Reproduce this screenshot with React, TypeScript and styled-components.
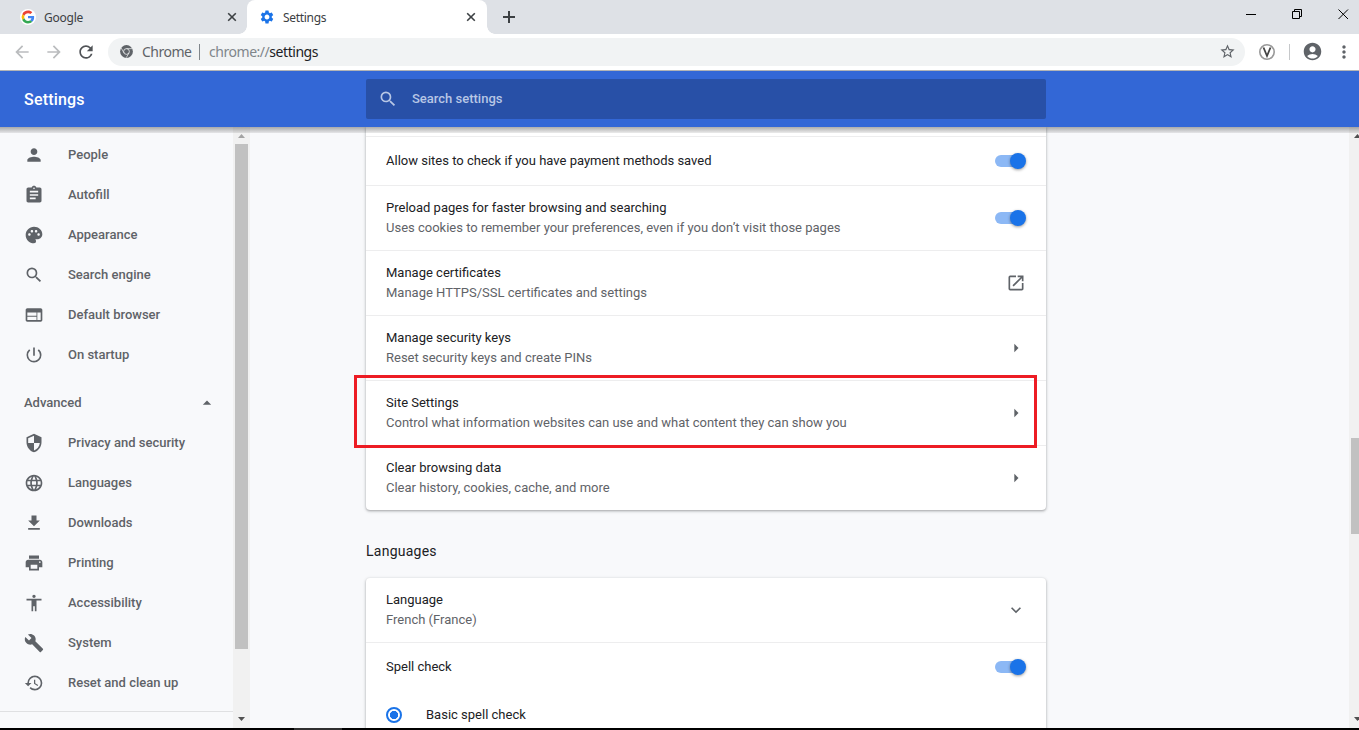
import React from "react";
import styled, { createGlobalStyle } from "styled-components";
import {
  MdPerson, MdAssignment, MdPalette, MdSearch, MdWeb, MdPowerSettingsNew, MdArrowDropUp,
  MdSecurity, MdLanguage, MdFileDownload, MdPrint, MdAccessibility, MdBuild, MdRestore,
  MdOpenInNew, MdArrowRight, MdExpandMore, MdStarBorder, MdAccountCircle, MdMoreVert,
  MdArrowBack, MdArrowForward, MdRefresh, MdSettings,
} from "react-icons/md";

const GlobalStyle = createGlobalStyle`
  * { box-sizing: border-box; }
  body { margin: 0; overflow: hidden; font-family: Roboto, sans-serif; font-size: 13px; color: #202124; }
  svg { display: block; flex: none; }
`;

const Window = styled.div`
  width: 1359px;
  height: 730px;
  display: flex;
  flex-direction: column;
  overflow: hidden;
  background: #f8f9fb;
`;

/* ---------- tab strip ---------- */

const TabStrip = styled.div`
  flex: none;
  height: 34px;
  display: flex;
  background: #dee1e6;
`;

const Tab = styled.div<{ $active?: boolean }>`
  position: relative;
  width: ${(p) => (p.$active ? 240 : 247)}px;
  display: flex;
  align-items: center;
  padding: 0 ${(p) => (p.$active ? 11 : 10)}px 0 ${(p) => (p.$active ? 12 : 20)}px;
  border-radius: 8px 8px 0 0;
  background: ${(p) => (p.$active ? "#fff" : "transparent")};
  font: 12px "Noto Sans", sans-serif;
  color: #3c4043;
`;

const TabFoot = styled.span<{ $side: "left" | "right" }>`
  position: absolute;
  bottom: 0;
  ${(p) => p.$side}: -8px;
  width: 8px;
  height: 8px;
  background: radial-gradient(circle at ${(p) => p.$side} top, transparent 7.5px, #fff 8px);
`;

const TabTitle = styled.span<{ $spacing: number }>`
  flex: 1;
  margin-left: 8px;
  letter-spacing: ${(p) => p.$spacing}px;
`;

const NewTab = styled.div`
  padding: 11px 0 0 16px;
`;

const WindowButtons = styled.div`
  margin-left: auto;
  display: flex;
  gap: 36px;
  padding: 9px 10px 0 0;
`;

/* ---------- address bar ---------- */

const Toolbar = styled.div`
  flex: none;
  height: 37px;
  display: flex;
  align-items: center;
  padding: 0 5px 1px 12px;
  border-bottom: 1px solid #b3b4b6;
  background: #fff;
  color: #5f6368;
`;

const NavIcons = styled.div`
  flex: none;
  display: flex;
  gap: 12px;
  margin-right: 12px;
`;

const AddressBar = styled.div`
  flex: none;
  width: 1137px;
  height: 28px;
  display: flex;
  align-items: center;
  padding: 0 9px 0 12px;
  border-radius: 14px;
  background: #f1f3f4;
  font: 14px "Noto Sans", sans-serif;
`;

const SiteName = styled.span`
  width: 57px;
  margin-left: 9px;
  color: #5f6368;
  letter-spacing: -0.5px;
`;

const Divider = styled.span<{ $color: string }>`
  width: 1px;
  height: 16px;
  background: ${(p) => p.$color};
`;

const Url = styled.span`
  flex: 1;
  margin-left: 9px;
  color: #80868b;
  letter-spacing: -0.46px;
  b { font-weight: 400; color: #202124; }
`;

const Extensions = styled.div`
  flex: 1;
  display: flex;
  align-items: center;
  padding-left: 13px;
`;

const Profile = styled.span`
  margin: 0 11px 0 12px;
`;

const ExtensionIcon = styled.span`
  margin-right: 13px;
`;

/* ---------- settings header ---------- */

const Header = styled.header`
  flex: none;
  position: relative;
  z-index: 2;
  height: 56px;
  display: flex;
  align-items: center;
  background: #3367d6;
`;

const HeaderShade = styled.div`
  position: absolute;
  top: 100%;
  left: 0;
  right: 0;
  height: 6px;
  background: linear-gradient(rgba(0, 0, 0, 0.32), rgba(0, 0, 0, 0.08));
`;

const HeaderTitle = styled.h1`
  width: 366px;
  margin: 0;
  padding: 1px 0 0 24px;
  font-size: 16px;
  font-weight: 500;
  letter-spacing: 0.2px;
  color: #fff;
`;

const SearchBox = styled.div`
  width: 680px;
  height: 40px;
  display: flex;
  align-items: center;
  gap: 14px;
  padding-left: 12px;
  border-radius: 2px;
  background: #2850a7;
  color: #b7c6e5;
  font-weight: 500;
`;

/* ---------- body ---------- */

const Body = styled.div`
  flex: 1;
  min-height: 0;
  display: flex;
`;

const Sidebar = styled.nav`
  width: 233px;
  padding-top: 8px;
  color: #5f6368;
  font-weight: 500;
`;

const NavItem = styled.div`
  height: 40px;
  display: flex;
  align-items: center;
  gap: 24px;
  padding-left: 24px;
`;

const RaisedText = styled.span`
  padding-bottom: 2px;
`;

const NavGroup = styled(NavItem)`
  justify-content: space-between;
  margin-top: 8px;
  padding-right: 16px;
`;

const NavRule = styled.div`
  margin-top: 8px;
  border-top: 1px solid #dfe0e2;
`;

const ScrollTrack = styled.div<{ $width: number }>`
  flex: none;
  width: ${(p) => p.$width}px;
  display: flex;
  flex-direction: column;
  justify-content: space-between;
  padding: 7px 0;
  overflow: hidden;
  background: #f1f1f1;
`;

const ScrollThumb = styled.div<{ $before: number; $height: number }>`
  width: 13px;
  height: ${(p) => p.$height}px;
  margin: ${(p) => p.$before}px 0 auto 2px;
  background: #c1c1c1;
`;

const ScrollArrow = styled.svg<{ $left: number }>`
  margin-left: ${(p) => p.$left}px;
`;

const Main = styled.main`
  flex: 1;
  overflow: hidden;
  padding-left: 116px;
`;

const Card = styled.section`
  position: relative;
  width: 680px;
  background: #fff;
  border-radius: 4px;
  box-shadow: 0 1px 2px rgba(60, 64, 67, 0.3), 0 1px 3px 1px rgba(60, 64, 67, 0.15);
`;

const PrivacyCard = styled(Card)`
  padding-top: 9px;
  border-radius: 0 0 4px 4px;
`;

const Row = styled.div<{ $tall?: boolean }>`
  height: ${(p) => (p.$tall ? 65 : 49)}px;
  display: flex;
  align-items: center;
  justify-content: space-between;
  padding: 0 20px;
  border-top: 1px solid #ededee;
`;

const FirstRow = styled(Row)`
  height: 64px;
  border-top: none;
`;

const Label = styled.div`
  line-height: 20px;
`;

const Hint = styled.div`
  line-height: 20px;
  color: #5f6368;
`;

const IconSlot = styled.span`
  color: #5f6368;
`;

const SectionTitle = styled.h2`
  height: 68px;
  margin: 0;
  padding-top: 14px;
  line-height: 54px;
  font-size: 14px;
  font-weight: 400;
  letter-spacing: 0.25px;
`;

const Track = styled.span`
  width: 28px;
  height: 12px;
  margin-right: 3px;
  display: flex;
  align-items: center;
  justify-content: flex-end;
  border-radius: 6px;
  background: #8cb8f5;
`;

const Knob = styled.span`
  flex: none;
  width: 16px;
  height: 16px;
  margin-right: -3px;
  border-radius: 50%;
  background: #1a73e8;
  box-shadow: 0 1px 3px rgba(0, 0, 0, 0.4);
`;

const RadioRow = styled.div`
  height: 48px;
  display: flex;
  align-items: center;
  gap: 24px;
  padding-left: 20px;
`;

const Radio = styled.span`
  width: 16px;
  height: 16px;
  border: 2px solid #1a73e8;
  border-radius: 50%;
  background: radial-gradient(circle, #1a73e8 3.8px, #fff 4.4px);
`;

const Highlight = styled.div`
  position: absolute;
  left: -12px;
  top: 248px;
  width: 683px;
  height: 73px;
  border: 3px solid #ed1c24;
`;

const Taskbar = styled.div`
  flex: none;
  height: 2px;
  padding-left: 294px;
  background: #000;
`;

const TaskbarItem = styled.div`
  width: 48px;
  height: 2px;
  background: #303030;
`;

/* ---------- drawings ---------- */

const GoogleLogo = () => (
  <svg width="16" height="16" viewBox="0 0 16 16">
    <circle cx="8" cy="8" r="8" fill="#fff" />
    <g transform="translate(1.6 1.6) scale(.267)">
      <path fill="#EA4335" d="M24 9.5c3.54 0 6.71 1.22 9.21 3.6l6.85-6.85C35.9 2.38 30.47 0 24 0 14.62 0 6.51 5.38 2.56 13.22l7.98 6.19C12.43 13.72 17.74 9.5 24 9.5z" />
      <path fill="#4285F4" d="M46.98 24.55c0-1.57-.15-3.09-.38-4.55H24v9.02h12.94c-.58 2.96-2.26 5.48-4.78 7.18l7.73 6c4.51-4.18 7.09-10.36 7.09-17.65z" />
      <path fill="#FBBC05" d="M10.53 28.59a14.5 14.5 0 0 1 0-9.18l-7.98-6.19a24 24 0 0 0 0 21.56l7.98-6.19z" />
      <path fill="#34A853" d="M24 48c6.48 0 11.93-2.13 15.89-5.81l-7.73-6c-2.15 1.45-4.92 2.3-8.16 2.3-6.26 0-11.57-4.22-13.47-9.91l-7.98 6.19C6.51 42.62 14.62 48 24 48z" />
    </g>
  </svg>
);

const TabClose = () => (
  <svg width="10" height="10" viewBox="0 0 10 10" stroke="#3c4043" strokeWidth="1.6">
    <path d="M1.2 1.2l7.6 7.6M8.8 1.2l-7.6 7.6" />
  </svg>
);

const ChromeGlyph = () => (
  <svg width="13" height="13" viewBox="0 0 24 24">
    <circle cx="12" cy="12" r="11.8" fill="#5f6368" />
    <circle cx="12" cy="12" r="5.3" fill="none" stroke="#f1f3f4" strokeWidth="1.5" />
    <path d="M12 6.7h10.5M7.4 14.6L2.2 5.6M16.6 14.6L11.4 23.6" stroke="#f1f3f4" strokeWidth="1.3" />
  </svg>
);

const UpArrow = ({ left, color }: { left: number; color: string }) => (
  <ScrollArrow $left={left} width="7" height="4" viewBox="0 0 7 4">
    <path d="M0 4L3.5 0L7 4z" fill={color} />
  </ScrollArrow>
);

const DownArrow = ({ left }: { left: number }) => (
  <ScrollArrow $left={left} width="7" height="4" viewBox="0 0 7 4">
    <path d="M0 0L3.5 4L7 0z" fill="#505050" />
  </ScrollArrow>
);

const Toggle = () => <Track><Knob /></Track>;
const Chevron = () => <IconSlot><MdArrowRight size={20} /></IconSlot>;

const basicItems = [
  [MdPerson, "People"],
  [MdAssignment, "Autofill"],
  [MdPalette, "Appearance"],
  [MdSearch, "Search engine"],
  [MdWeb, "Default browser"],
  [MdPowerSettingsNew, "On startup"],
] as const;

const advancedItems = [
  [MdSecurity, "Privacy and security"],
  [MdLanguage, "Languages"],
  [MdFileDownload, "Downloads"],
  [MdPrint, "Printing"],
  [MdAccessibility, "Accessibility"],
  [MdBuild, "System"],
  [MdRestore, "Reset and clean up"],
] as const;

const privacyRows = [
  { label: "Preload pages for faster browsing and searching", hint: "Uses cookies to remember your preferences, even if you don’t visit those pages", end: <Toggle /> },
  { label: "Manage certificates", hint: "Manage HTTPS/SSL certificates and settings", end: <IconSlot><MdOpenInNew size={20} /></IconSlot> },
  { label: "Manage security keys", hint: "Reset security keys and create PINs", end: <Chevron /> },
  { label: "Site Settings", hint: "Control what information websites can use and what content they can show you", end: <Chevron /> },
  { label: "Clear browsing data", hint: "Clear history, cookies, cache, and more", end: <Chevron /> },
];

export default function App() {
  return (
    <Window>
      <GlobalStyle />
      <TabStrip>
        <Tab>
          <GoogleLogo />
          <TabTitle $spacing={-0.25}>Google</TabTitle>
          <TabClose />
        </Tab>
        <Tab $active>
          <TabFoot $side="left" />
          <TabFoot $side="right" />
          <MdSettings size={16} color="#1a73e8" />
          <TabTitle $spacing={-0.3}>Settings</TabTitle>
          <TabClose />
        </Tab>
        <NewTab>
          <svg width="12" height="12" viewBox="0 0 12 12" stroke="#3c4043" strokeWidth="2">
            <path d="M6 0v12M0 6h12" />
          </svg>
        </NewTab>
        <WindowButtons>
          <svg width="10" height="11" viewBox="0 0 10 11"><path d="M0 5.5h10" stroke="#000" /></svg>
          <svg width="10" height="11" viewBox="0 0 10 11" fill="none" stroke="#000">
            <path d="M.5 2.5h7v7h-7zM2.5 2.5v-2h7v7h-2" />
          </svg>
          <svg width="11" height="11" viewBox="0 0 11 11" stroke="#000"><path d="M.5.5l9.5 9.5M10 .5l-9.5 9.5" /></svg>
        </WindowButtons>
      </TabStrip>

      <Toolbar>
        <NavIcons>
          <MdArrowBack size={20} color="#babcbe" />
          <MdArrowForward size={20} color="#babcbe" />
          <MdRefresh size={20} color="#505357" />
        </NavIcons>
        <AddressBar>
          <ChromeGlyph />
          <SiteName>Chrome</SiteName>
          <Divider $color="#80868b" />
          <Url>chrome://<b>settings</b></Url>
          <MdStarBorder size={17} />
        </AddressBar>
        <Extensions>
          <ExtensionIcon>
            <svg width="18" height="18" viewBox="0 0 18 18" fill="none">
              <circle cx="9" cy="9" r="7.2" stroke="#999" strokeWidth="1.6" />
              <path d="M5.5 4.5L9 13L12.5 4.5" stroke="#444" strokeWidth="1.8" />
            </svg>
          </ExtensionIcon>
          <Divider $color="#c6c8ca" />
          <Profile><MdAccountCircle size={21} /></Profile>
          <MdMoreVert size={20} />
        </Extensions>
      </Toolbar>

      <Header>
        <HeaderTitle>Settings</HeaderTitle>
        <SearchBox>
          <MdSearch size={20} />
          <RaisedText>Search settings</RaisedText>
        </SearchBox>
        <HeaderShade />
      </Header>

      <Body>
        <Sidebar>
          {basicItems.map(([Icon, text]) => (
            <NavItem key={text}><Icon size={20} /><RaisedText>{text}</RaisedText></NavItem>
          ))}
          <NavGroup><RaisedText>Advanced</RaisedText><MdArrowDropUp size={20} /></NavGroup>
          {advancedItems.map(([Icon, text]) => (
            <NavItem key={text}><Icon size={20} /><RaisedText>{text}</RaisedText></NavItem>
          ))}
          <NavRule />
        </Sidebar>
        <ScrollTrack $width={17}>
          <UpArrow left={5} color="#a3a3a3" />
          <ScrollThumb $before={6} $height={505} />
          <DownArrow left={5} />
        </ScrollTrack>

        <Main>
          <PrivacyCard>
            <Row>
              <Label>Allow sites to check if you have payment methods saved</Label>
              <Toggle />
            </Row>
            {privacyRows.map((row) => (
              <Row $tall key={row.label}>
                <div>
                  <Label>{row.label}</Label>
                  <Hint>{row.hint}</Hint>
                </div>
                {row.end}
              </Row>
            ))}
            <Highlight />
          </PrivacyCard>
          <SectionTitle>Languages</SectionTitle>
          <Card>
            <FirstRow>
              <div>
                <Label>Language</Label>
                <Hint>French (France)</Hint>
              </div>
              <IconSlot><MdExpandMore size={20} /></IconSlot>
            </FirstRow>
            <Row>
              <Label>Spell check</Label>
              <Toggle />
            </Row>
            <RadioRow>
              <Radio />
              <Label>Basic spell check</Label>
            </RadioRow>
          </Card>
        </Main>
        <ScrollTrack $width={10}>
          <UpArrow left={5} color="#505050" />
          <ScrollThumb $before={300} $height={96} />
          <DownArrow left={5} />
        </ScrollTrack>
      </Body>
      <Taskbar><TaskbarItem /></Taskbar>
    </Window>
  );
}
